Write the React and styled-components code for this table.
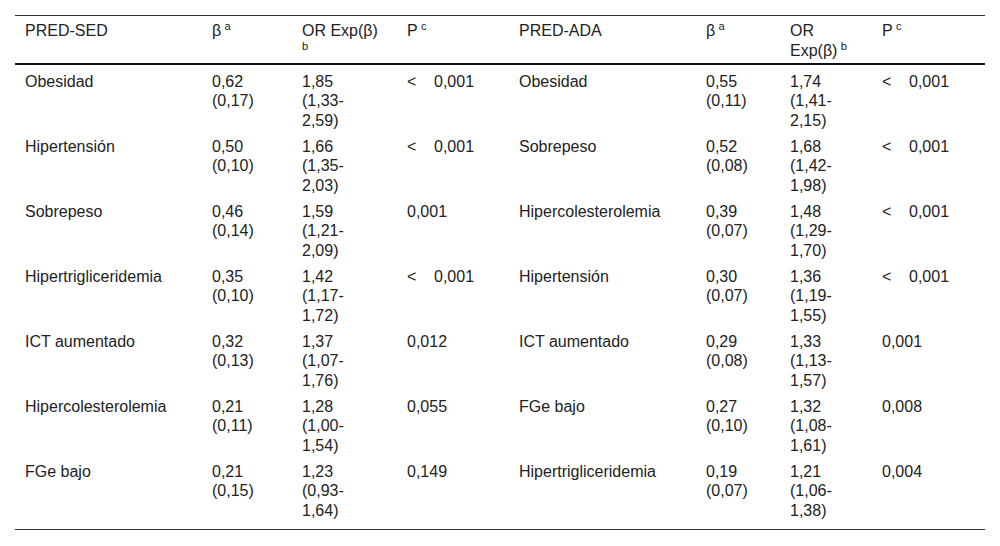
import styled, { createGlobalStyle } from 'styled-components';

const GlobalStyle = createGlobalStyle`
  html, body {
    margin: 0;
    padding: 0;
    background: #fff;
  }
  body {
    font-family: "Liberation Sans", Arial, sans-serif;
    color: #222;
  }
`;

const Page = styled.div`
  padding: 15px 15px 0;
`;

const Table = styled.table`
  width: 970px;
  table-layout: fixed;
  border-collapse: collapse;
  border-top: 1px solid #333;
  border-bottom: 1px solid #333;
  font-size: 16px;
  line-height: 19.5px;
`;

const HeadRow = styled.tr`
  border-bottom: 2px solid #111;
`;

const HeadCell = styled.th`
  text-align: left;
  font-weight: normal;
  vertical-align: top;
  padding: 5px 10px 2px;
  height: 40px;
  line-height: 20px;
`;

const Row = styled.tr``;

const Cell = styled.td`
  vertical-align: top;
  padding: ${(p) => (p.$last ? '6.5px 10px 9px' : '6.5px 10px 0')};
`;

const Line = styled.div`
  white-space: nowrap;
`;

const Sup = styled.sup`
  font-size: 0.7em;
  line-height: 0;
  vertical-align: 0.55em;
  margin-left: ${(p) => (p.$flush ? '0' : '0.3em')};
`;

const Less = styled.span`
  display: inline-block;
  width: 27px;
`;

const widths = [187, 90, 105, 112, 187, 84, 92, 113];

const rows = [
  ['Obesidad', '0,62 (0,17)', '1,85 (1,33-2,59)', '<0,001', 'Obesidad', '0,55 (0,11)', '1,74 (1,41-2,15)', '<0,001'],
  ['Hipertensión', '0,50 (0,10)', '1,66 (1,35-2,03)', '<0,001', 'Sobrepeso', '0,52 (0,08)', '1,68 (1,42-1,98)', '<0,001'],
  ['Sobrepeso', '0,46 (0,14)', '1,59 (1,21-2,09)', '0,001', 'Hipercolesterolemia', '0,39 (0,07)', '1,48 (1,29-1,70)', '<0,001'],
  ['Hipertrigliceridemia', '0,35 (0,10)', '1,42 (1,17-1,72)', '<0,001', 'Hipertensión', '0,30 (0,07)', '1,36 (1,19-1,55)', '<0,001'],
  ['ICT aumentado', '0,32 (0,13)', '1,37 (1,07-1,76)', '0,012', 'ICT aumentado', '0,29 (0,08)', '1,33 (1,13-1,57)', '0,001'],
  ['Hipercolesterolemia', '0,21 (0,11)', '1,28 (1,00-1,54)', '0,055', 'FGe bajo', '0,27 (0,10)', '1,32 (1,08-1,61)', '0,008'],
  ['FGe bajo', '0,21 (0,15)', '1,23 (0,93-1,64)', '0,149', 'Hipertrigliceridemia', '0,19 (0,07)', '1,21 (1,06-1,38)', '0,004'],
];

// "1,85 (1,33-2,59)" -> ["1,85", "(1,33-", "2,59)"]
const splitValue = (v) => {
  const [est, ci] = v.split(' ');
  if (!ci) return [est];
  const dash = ci.indexOf('-');
  if (dash < 0) return [est, ci];
  return [est, ci.slice(0, dash + 1), ci.slice(dash + 1)];
};

const PValue = ({ v }) =>
  v.startsWith('<') ? (
    <Line>
      <Less>&lt;</Less>
      {v.slice(1)}
    </Line>
  ) : (
    <Line>{v}</Line>
  );

const Header = ({ name, wrapOr }) => (
  <>
    <HeadCell>{name}</HeadCell>
    <HeadCell>
      β<Sup>a</Sup>
    </HeadCell>
    <HeadCell>
      {wrapOr ? (
        <>
          <Line>OR</Line>
          <Line>
            Exp(β)<Sup>b</Sup>
          </Line>
        </>
      ) : (
        <>
          <Line>OR Exp(β)</Line>
          <Line>
            <Sup $flush>b</Sup>
          </Line>
        </>
      )}
    </HeadCell>
    <HeadCell>
      P<Sup>c</Sup>
    </HeadCell>
  </>
);

const App = () => {
  return (
    <>
      <GlobalStyle />
      <Page>
        <Table>
          <colgroup>
            {widths.map((w, i) => (
              <col key={i} style={{ width: w }} />
            ))}
          </colgroup>
          <thead>
            <HeadRow>
              <Header name="PRED-SED" />
              <Header name="PRED-ADA" wrapOr />
            </HeadRow>
          </thead>
          <tbody>
            {rows.map((r, i) => {
              const last = i === rows.length - 1;
              return (
                <Row key={i}>
                  {r.map((v, j) => (
                    <Cell key={j} $last={last}>
                      {j % 4 === 0 && <Line>{v}</Line>}
                      {(j % 4 === 1 || j % 4 === 2) &&
                        splitValue(v).map((l, k) => <Line key={k}>{l}</Line>)}
                      {j % 4 === 3 && <PValue v={v} />}
                    </Cell>
                  ))}
                </Row>
              );
            })}
          </tbody>
        </Table>
      </Page>
    </>
  );
};

export default App;
